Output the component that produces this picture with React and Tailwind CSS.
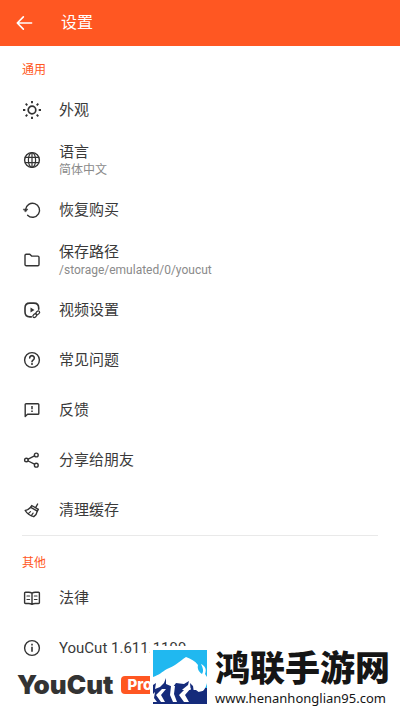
import clsx from "clsx";

const Icon = ({ children, className = "size-5" }) => (
    <svg
        viewBox="0 0 20 20"
        fill="none"
        stroke="currentColor"
        strokeWidth="1.4"
        strokeLinecap="round"
        strokeLinejoin="round"
        aria-hidden="true"
        className={clsx("shrink-0", className)}
    >
        {children}
    </svg>
);

const SunIcon = () => (
    <Icon>
        <circle cx="10" cy="10" r="3.8" strokeWidth="1.7" />
        <path
            strokeWidth="1.9"
            strokeLinecap="butt"
            d="M10 1v2.3M10 16.7V19M1 10h2.3M16.7 10H19M3.7 3.7l1.6 1.6M14.7 14.7l1.6 1.6M3.7 16.3l1.6-1.6M14.7 5.3l1.6-1.6"
        />
    </Icon>
);

const GlobeIcon = () => (
    <Icon>
        <circle cx="10" cy="10" r="7.4" />
        <ellipse cx="10" cy="10" rx="3.6" ry="7.4" strokeWidth="1.2" />
        <path strokeWidth="1.2" d="M3.3 7.3h13.4M3.3 12.7h13.4M10 2.6v14.8" />
    </Icon>
);

const RestoreIcon = () => (
    <Icon>
        <path d="M3.6 9.6a7 7 0 1 1 2 5.6" />
        <path d="M1.6 9.2h4.2l-2.1 2.6z" fill="currentColor" strokeWidth="0.7" />
    </Icon>
);

const FolderIcon = () => (
    <Icon>
        <path d="M3 5.4c0-.7.5-1.2 1.2-1.2h3.6l1.8 1.9h6.2c.7 0 1.2.5 1.2 1.2v7.2c0 .7-.5 1.2-1.2 1.2H4.2c-.7 0-1.2-.5-1.2-1.2z" />
    </Icon>
);

const VideoIcon = () => (
    <Icon>
        <path
            strokeWidth="1.6"
            d="M16.7 9.2V8c0-3.6-1.3-4.9-4.9-4.9H7.9C4.3 3.1 3 4.4 3 8v4c0 3.6 1.3 4.9 4.9 4.9h1.4"
        />
        <path d="M8.5 7.5v5l4-2.5z" fill="currentColor" stroke="none" />
        <ellipse cx="12.8" cy="15.6" rx="2.2" ry="1.5" transform="rotate(-42 12.8 15.6)" strokeWidth="1.2" />
        <ellipse cx="15.7" cy="12.8" rx="2.2" ry="1.5" transform="rotate(-42 15.7 12.8)" strokeWidth="1.2" />
    </Icon>
);

const HelpIcon = () => (
    <Icon>
        <circle cx="10" cy="10" r="7.4" />
        <path strokeWidth="1.6" d="M7.7 8a2.3 2.3 0 1 1 3.6 1.9c-.9.6-1.3 1-1.3 1.9" />
        <circle cx="10" cy="14.1" r="1" fill="currentColor" stroke="none" />
    </Icon>
);

const FeedbackIcon = () => (
    <Icon>
        <path d="M3.2 16.5V4.6c0-.5.4-.9.9-.9h11.8c.5 0 .9.4.9.9v8.8c0 .5-.4.9-.9.9H5.500z" />
        <path strokeWidth="1.5" strokeLinecap="butt" d="M10 6v3.3M10 10.6v1.5" />
    </Icon>
);

const ShareIcon = () => (
    <Icon>
        <circle cx="4.4" cy="10" r="1.8" />
        <circle cx="14.3" cy="5" r="1.9" />
        <circle cx="14.3" cy="15.2" r="1.9" />
        <path d="M6.2 9.1l6.3-3.2M6.2 11l6.3 3.2" />
    </Icon>
);

const BroomIcon = () => (
    <Icon>
        <path d="M15.6 4l-1.8 3.3M9.7 5.5l6.6 3.8M9.7 5.5l-1 1.8 6.6 3.8 1-1.8" />
        <path d="M8.7 7.3c-1.7 1.9-3.4 2.8-5.5 3.2 1.8 3 4.6 5 8.6 6.2 2-1.3 3-3 3.5-5.6" />
        <path strokeWidth="1.2" d="M6.3 13.6l2.2-2M9.3 15.6l1.8-2.5" />
    </Icon>
);

const BookIcon = () => (
    <Icon>
        <path d="M10 5.2c-1.1-.7-2-.9-3.2-.9H3.5c-.5 0-.9.4-.9.9v9.6c0 .4.4.7.9.7h3.3c1.2 0 2.1.2 3.2.8 1.1-.6 2-.8 3.2-.8h3.3c.5 0 .9-.3.9-.7V5.2c0-.5-.4-.9-.9-.9h-3.3c-1.2 0-2.1.2-3.2.9zM10 5.2v11" />
        <path strokeWidth="1.2" d="M5 8h2.6M5 11.5h2.6M12.4 8H15M12.4 11.5H15" />
    </Icon>
);

const InfoIcon = () => (
    <Icon>
        <circle cx="10" cy="10" r="7.4" />
        <path strokeWidth="1.6" strokeLinecap="butt" d="M10 8.7v5M10 5.7v1.7" />
    </Icon>
);

const generalItems = [
    { label: "外观", icon: SunIcon },
    { label: "语言", detail: "简体中文", icon: GlobeIcon },
    { label: "恢复购买", icon: RestoreIcon },
    { label: "保存路径", detail: "/storage/emulated/0/youcut", icon: FolderIcon },
    { label: "视频设置", icon: VideoIcon },
    { label: "常见问题", icon: HelpIcon },
    { label: "反馈", icon: FeedbackIcon },
    { label: "分享给朋友", icon: ShareIcon },
    { label: "清理缓存", icon: BroomIcon },
];

const otherItems = [
    { label: "法律", icon: BookIcon },
    { label: "YouCut 1.611.1199", icon: InfoIcon },
];

const SettingsSection = ({ title, items, className }) => (
    <section className={clsx("flex flex-col", className)}>
        <h2 className="px-[22px] text-xs leading-5 text-[#ff5722]">{title}</h2>
        <ul>
            {items.map(({ label, detail, icon: ItemIcon }) => (
                <li key={label}>
                    <button type="button" className="flex h-[50px] w-full items-center gap-[17px] px-[22px] text-left">
                        <ItemIcon />
                        <span className="flex flex-col">
                            <span className="text-[15px] leading-5 text-[#3a3a3a]">{label}</span>
                            {detail && <span className="text-xs leading-4 text-[#8a8a8a]">{detail}</span>}
                        </span>
                    </button>
                </li>
            ))}
        </ul>
    </section>
);

// White bison on a sky / navy tile
const BisonLogo = () => (
    <svg viewBox="0 0 54 54" className="size-[54px] shrink-0" aria-hidden="true">
        <path fill="#20b8f0" d="M0 0h54v40H0z" />
        <path fill="#152b7b" d="M0 38h54v16H0z" />
        <path
            fill="#ffffff"
            d="M0 27c6-2 9-5 14-8 6-2 12-7 19-12 5 2 9 4 12 8-1 4 1 7 4 9 2-3 1-6-1-10 4 2 6 5 4 10l2 3v6c-1 5-4 9-7 10l-4-3H0z"
        />
        <path fill="#152b7b" d="M0 35l3-2-1 6 5-2 4-4 2-5v6l7 3 1 17H0z" />
        <path fill="#152b7b" d="M20 37l3-4 8 1 5-3-1 4-5 4-7 7 2 8h-5z" />
        <path fill="#152b7b" d="M37 33l3 3 1 7 13-3v14H39z" />
        <path fill="#ffffff" d="M13 39H9l-6 6 5 7h4l-4-7zM38 38h-5l-7 7 5 7h5l-4-7z" />
        <path fill="#ffffff" d="M0 44l2-2-1 6 3 4H0zM18 36h4l-1 8 3 8h-4l-3-7z" />
    </svg>
);

const App = () => {
    return (
        <div className="relative w-full overflow-hidden bg-white font-[Roboto,'Noto_Sans_CJK_SC',sans-serif] text-[#333333]">
            <header className="flex h-[46px] items-center gap-[25px] bg-[#ff5722] px-3.5 text-white">
                <button type="button" aria-label="返回">
                    <Icon className="size-[22px]">
                        <path strokeWidth="1.5" d="M16 10H3M8.500 4.500L3 10l5.500 5.500" />
                    </Icon>
                </button>
                <h1 className="text-base">设置</h1>
            </header>

            <main>
                <SettingsSection title="通用" items={generalItems} className="gap-[5px] pt-3.5" />
                <hr className="mx-[22px] border-[#e9e9e9]" />
                <SettingsSection title="其他" items={otherItems} className="pt-[17px]" />
            </main>

            <footer className="pb-[13px] pl-[17px] font-[Inter,sans-serif]">
                <div className="flex h-6 items-center gap-2">
                    <span className="text-[26px] leading-6 font-black">YouCut</span>
                    <span className="rounded-sm bg-[#ff5722] px-1.5 text-[15px] leading-[18px] font-extrabold text-white">
                        Pro
                    </span>
                </div>
            </footer>

            <div className="absolute right-0 bottom-0 left-[150px] flex h-16 gap-2 bg-white pt-1 pl-[3px]">
                <BisonLogo />
                <div className="whitespace-nowrap text-[#151515]">
                    <p className="text-[35px] leading-10 font-black">鸿联手游网</p>
                    <p className="font-['Noto_Sans',sans-serif] text-[13px] leading-4">www.henanhonglian95.com</p>
                </div>
            </div>
        </div>
    );
};

export default App;
